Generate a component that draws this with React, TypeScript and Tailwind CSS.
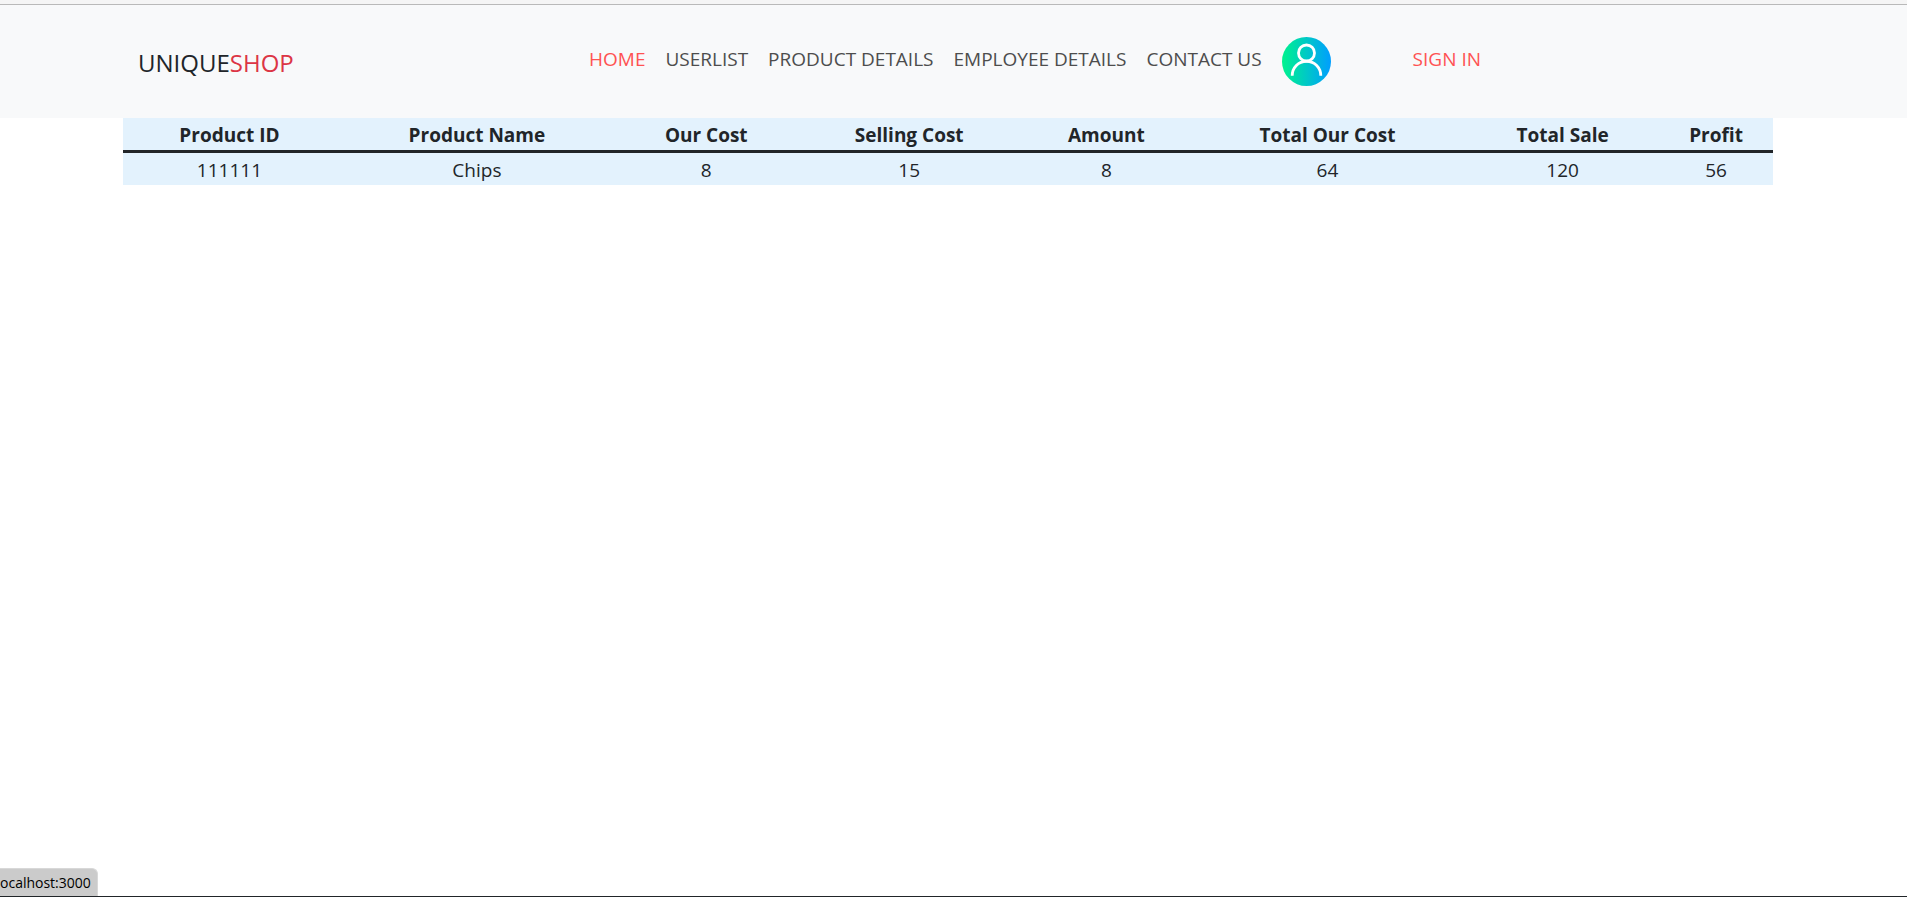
const navLinks = [
  { label: "HOME", active: true },
  { label: "USERLIST", active: false },
  { label: "PRODUCT DETAILS", active: false },
  { label: "EMPLOYEE DETAILS", active: false },
  { label: "CONTACT US", active: false },
];

const columns = [
  { label: "Product ID", width: "w-[12.9%]" },
  { label: "Product Name", width: "w-[17.1%]" },
  { label: "Our Cost", width: "w-[10.7%]" },
  { label: "Selling Cost", width: "w-[13.9%]" },
  { label: "Amount", width: "w-[10%]" },
  { label: "Total Our Cost", width: "w-[16.8%]" },
  { label: "Total Sale", width: "w-[11.7%]" },
  { label: "Profit", width: "w-[6.9%]" },
];

const rows = [["111111", "Chips", "8", "15", "8", "64", "120", "56"]];

function Avatar() {
  return (
    <svg className="size-[49px] shrink-0" viewBox="0 0 49 49" fill="none" aria-hidden="true">
      <defs>
        <linearGradient id="avatar-fill" x1="0" y1="0" x2="1" y2="0">
          <stop offset="0" stopColor="#00f38d" />
          <stop offset="1" stopColor="#009eff" />
        </linearGradient>
      </defs>
      <circle cx="24.5" cy="24.5" r="24.5" fill="url(#avatar-fill)" />
      <circle cx="24.5" cy="16" r="8" stroke="#fff" strokeWidth="2.8" />
      <path d="M10.2 38.8C10.2 30.4 16.4 24.4 24.5 24.4S38.8 30.4 38.8 38.8" stroke="#fff" strokeWidth="2.8" />
    </svg>
  );
}

function Header() {
  return (
    <header className="flex items-start bg-[#f8f9fa] pt-8 pb-8 pl-[138px]">
      <a href="#" className="mt-2 w-[451px] text-2xl leading-9 text-[#212529]">
        UNIQUE<span className="text-[#dc3545]">SHOP</span>
      </a>
      <nav className="flex items-start gap-5 text-[19px] leading-[44px] whitespace-nowrap">
        {navLinks.map((link) => (
          <a key={link.label} href="#" className={link.active ? "text-[#ff5252]" : "text-[#4d4d4d]"}>
            {link.label}
          </a>
        ))}
        <a href="#" aria-label="Account">
          <Avatar />
        </a>
        <a href="#" className="ml-[62px] text-[#ff5252]">
          SIGN IN
        </a>
      </nav>
    </header>
  );
}

export default function App() {
  return (
    <div className="flex min-h-screen flex-col bg-white font-['Segoe_UI','Open_Sans',sans-serif] text-[#212529]">
      <div className="h-[5px] border-b border-[#b9b9b9] bg-[#f5f5f5]" />
      <Header />
      <main className="grow pr-[134px] pl-[123px]">
        <table className="w-full table-fixed border-collapse bg-[#e3f2fd] text-center text-[19px] leading-[30px]">
          <thead>
            <tr className="border-b-3 border-[#212529]">
              {columns.map((column) => (
                <th key={column.label} scope="col" className={`${column.width} px-0 pt-0.5 pb-0 font-bold`}>
                  {column.label}
                </th>
              ))}
            </tr>
          </thead>
          <tbody>
            {rows.map((row) => (
              <tr key={row[0]}>
                {row.map((value, index) => (
                  <td key={columns[index].label} className="px-0 pt-0.5 pb-0">
                    {value}
                  </td>
                ))}
              </tr>
            ))}
          </tbody>
        </table>
      </main>
      <footer className="flex border-b border-[#212529]">
        <div className="h-7 rounded-tr-md border-t border-r border-[#d8d8d8] bg-[#cbcbcb] pr-1.5 text-sm leading-7 text-black">
          ocalhost:3000
        </div>
      </footer>
    </div>
  );
}
